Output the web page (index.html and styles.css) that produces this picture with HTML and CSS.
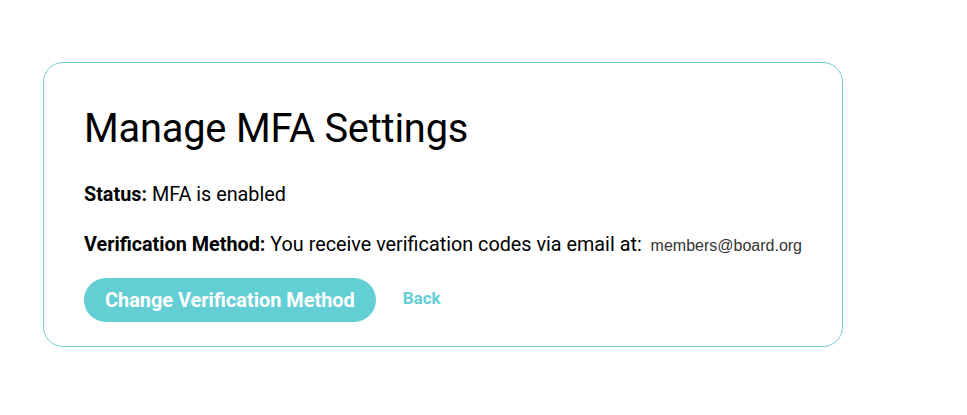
FILE: index.html
```html
<!DOCTYPE html>
<html>
<head>
<meta charset="utf-8">
<link rel="stylesheet" href="styles.css">
</head>
<body>
<div class="page">
  <div class="card">
    <h1 class="title">Manage MFA Settings</h1>
    <p class="line line-status"><strong>Status:</strong> MFA is enabled</p>
    <p class="line line-method"><strong>Verification Method:</strong> You receive verification codes via email at: <span class="email">members@board.org</span></p>
    <div class="actions">
      <button class="btn-primary">Change Verification Method</button>
      <a class="link-back" href="#">Back</a>
    </div>
  </div>
</div>
</body>
</html>
```
FILE: styles.css
```css
html, body {
  margin: 0;
  padding: 0;
  background: #ffffff;
}
body {
  font-family: Roboto, "Noto Sans", sans-serif;
  color: #000;
}
.page {
  padding: 62px 0 0 43px;
}
.card {
  width: 800px;
  height: 285px;
  box-sizing: border-box;
  border: 1px solid #72cdd1;
  border-radius: 20px;
  padding: 42px 40px 0 40px;
}
.title {
  margin: 0;
  font-size: 39.8px;
  font-weight: 400;
  line-height: 48px;
  letter-spacing: -0.2px;
}
.line {
  margin: 0;
  font-size: 19.8px;
  line-height: 24px;
}
.line-status {
  margin-top: 30px;
}
.line-method {
  margin-top: 26px;
}
.line strong {
  font-weight: 700;
}
.email {
  font-family: "Liberation Sans", Arial, sans-serif;
  font-size: 16px;
  color: #333;
  margin-left: 4px;
}
.actions {
  display: flex;
  align-items: center;
  gap: 27px;
  margin-top: 20px;
}
.btn-primary {
  background: #63cfd4;
  color: #fff;
  border: none;
  border-radius: 22px;
  height: 44px;
  padding: 0 21px;
  font-family: Roboto, sans-serif;
  font-weight: 700;
  font-size: 19.9px;
  cursor: pointer;
}
.link-back {
  color: #63cfd4;
  text-decoration: none;
  font-weight: 700;
  font-size: 17px;
  margin-top: -4px;
}
```
